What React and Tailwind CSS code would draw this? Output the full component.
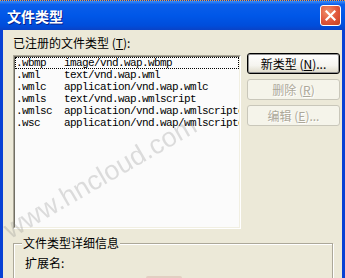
import React from 'react';

const types = [
  ['.wbmp', 'image/vnd.wap.wbmp'],
  ['.wml', 'text/vnd.wap.wml'],
  ['.wmlc', 'application/vnd.wap.wmlc'],
  ['.wmls', 'text/vnd.wap.wmlscript'],
  ['.wmlsc', 'application/vnd.wap.wmlscriptc'],
  ['.wsc', 'application/vnd.wap/wmlscriptc'],
];

const XpButton = ({ label, hotkey, dots, disabled }) => (
  <div
    className={
      'h-[21px] w-[93px] rounded-[3px] flex items-center justify-center leading-[14px] ' +
      (disabled
        ? 'border border-[#c9c7ba] bg-[#f5f4ea] text-[#aca899] [text-shadow:1px_1px_0_#ffffff]'
        : 'border border-black bg-[linear-gradient(to_bottom,#ffffff,#f5f4ef_60%,#dedac9)] text-black shadow-[inset_0_0_0_1px_#8f8f8f]')
    }
  >
    {label} (<span className="underline">{hotkey}</span>){dots ? '...' : ''}
  </div>
);

export default function App() {
  return (
    <div className="w-[345px] h-[278px] overflow-hidden relative bg-[#0841d4] flex flex-col font-['SimSun','Noto_Sans_CJK_SC',sans-serif] text-[12px] text-black">
      {/* title bar */}
      <div className="h-[30px] shrink-0 border-t border-dotted border-[#f0a040] bg-[linear-gradient(to_bottom,#3d8ef9_0%,#0a5eea_12%,#0057e8_50%,#004ddb_85%,#0a42c6_100%)] flex items-center pl-[7px] pr-[4px]">
        <span className="flex-1 text-white font-bold text-[14px] leading-[16px] [text-shadow:1px_1px_0_#0a1e8a]">
          文件类型
        </span>
        <div className="w-[21px] h-[21px] rounded-[3px] border border-white bg-[radial-gradient(circle_at_35%_30%,#f0906a,#e0553a_55%,#c4421f)] flex items-center justify-center">
          <svg width="11" height="11" viewBox="0 0 11 11">
            <path d="M1.5 1.5 L9.5 9.5 M9.5 1.5 L1.5 9.5" stroke="white" strokeWidth="2.2" strokeLinecap="square" />
          </svg>
        </div>
      </div>

      {/* body */}
      <div className="flex-1 mx-[3px] bg-[#ece9d8] pl-[10px] pt-[6px] relative">
        <div className="h-[14px] leading-[14px]">
          已注册的文件类型 (<span className="underline">T</span>):
        </div>

        <div className="flex mt-[5px] gap-[6px]">
          <div className="w-[228px] h-[174px] border border-t-[#aca899] border-l-[#aca899] border-r-white border-b-white">
            <div className="h-full border border-t-[#716f64] border-l-[#716f64] border-r-[#f1efe2] border-b-[#f1efe2] bg-[#fbfbfb] overflow-hidden font-['Liberation_Mono',monospace] text-[11px] tracking-[-0.6px]">
              {types.map(([ext, mime], i) => (
                <div
                  key={ext}
                  className={
                    'h-[12px] flex items-center whitespace-nowrap ' +
                    (i === 0 ? 'border border-dotted border-black' : 'border border-transparent')
                  }
                >
                  <span className="w-[48px] shrink-0">{ext}</span>
                  <span>{mime}</span>
                </div>
              ))}
            </div>
          </div>

          <div className="flex flex-col gap-[5px] -mt-[2px]">
            <XpButton label="新类型" hotkey="N" dots />
            <XpButton label="删除" hotkey="R" disabled />
            <XpButton label="编辑" hotkey="E" dots disabled />
          </div>
        </div>

        {/* group box */}
        <div className="relative mt-[14px] w-[320px] h-[60px] border border-[#aca899] shadow-[inset_1px_1px_0_#ffffff,1px_1px_0_#ffffff] pt-[12px] pl-[11px]">
          <span className="absolute left-[8px] -top-[8px] px-[1px] bg-[#ece9d8] leading-[14px]">文件类型详细信息</span>
          <div className="leading-[14px]">扩展名:</div>
        </div>

        <div className="absolute left-[143px] top-[246px] w-[36px] h-[3px] rounded-t-[2px] bg-[#e2cfc2]"></div>
      </div>

      {/* watermark */}
      <div className="absolute left-[-10px] top-[162px] w-[220px] text-center -rotate-[30deg] font-['Liberation_Sans',sans-serif] text-[27px] leading-[30px] text-[#808080] opacity-25 pointer-events-none">
        www.hncloud.com
      </div>
    </div>
  );
}
